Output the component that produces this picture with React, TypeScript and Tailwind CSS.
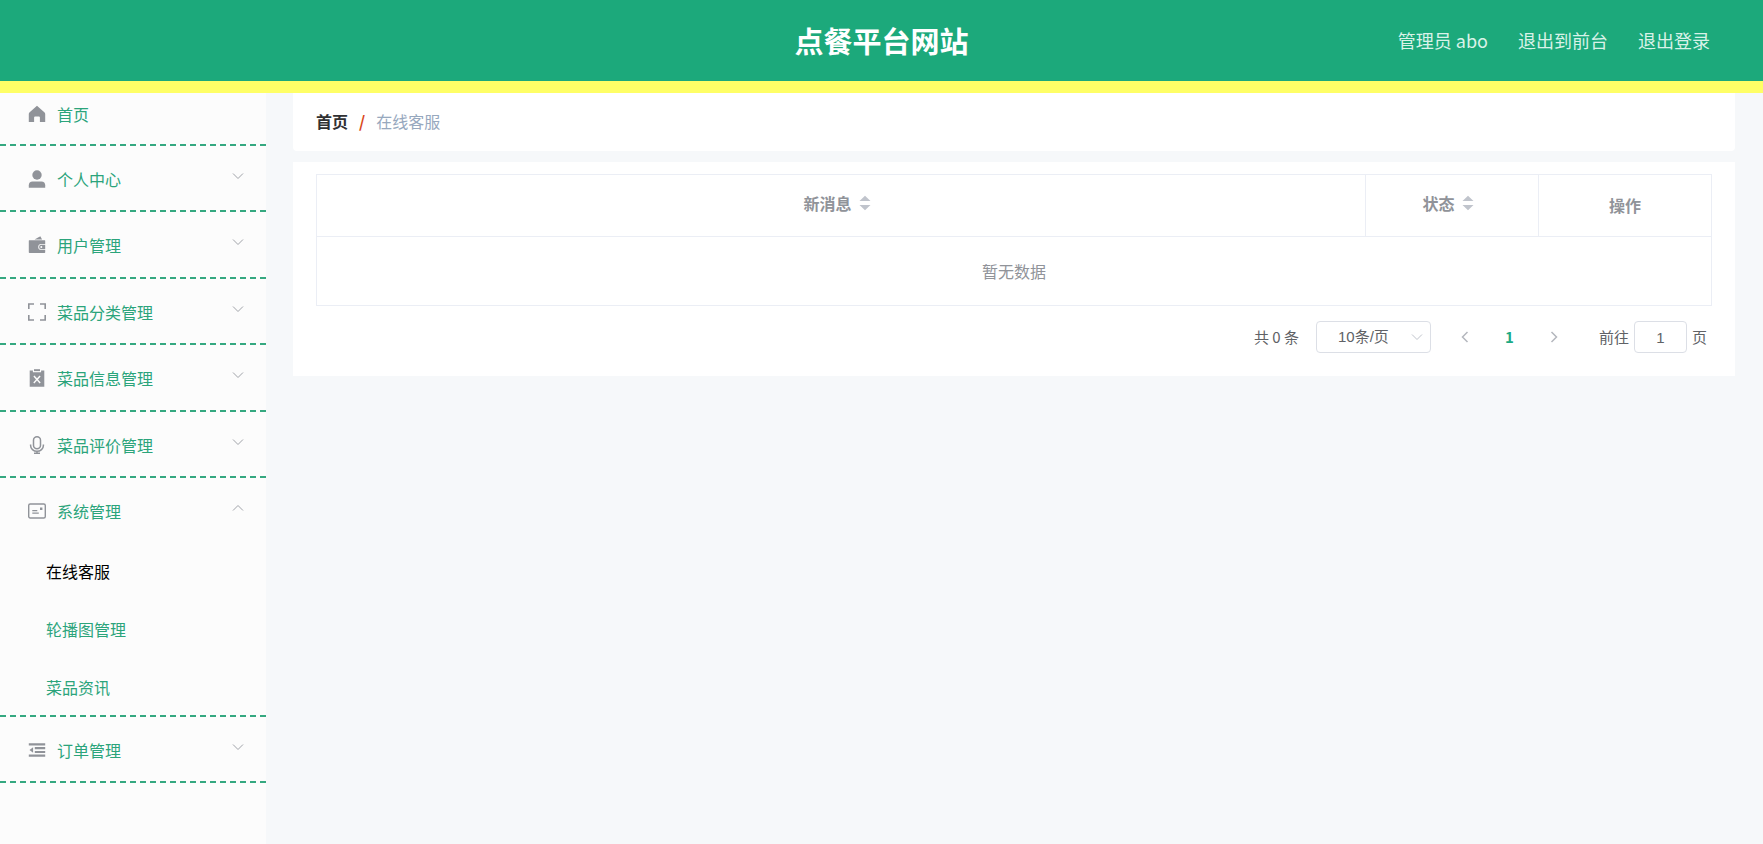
import { type FC, type ReactNode, useState } from "react";

// ── Icons ───────────────────────────────────────────────────────────────────

const Icon: FC<{ children: ReactNode }> = ({ children }) => (
	<svg
		viewBox="0 0 18 18"
		className="w-[18px] h-[18px] shrink-0 text-[#909399]"
		fill="currentColor"
		aria-hidden="true"
	>
		{children}
	</svg>
);

const HomeIcon = () => (
	<Icon>
		<path d="M9 .8 16.600 7.600q.6.6.6 1.300v8.200h-5.300v-4.600q0-1-1-1H7.100q-1 0-1 1v4.600H.8V8.900q0-.7.6-1.300Z" />
	</Icon>
);

const UserIcon = () => (
	<Icon>
		<circle cx="9" cy="5" r="4.700" />
		<path d="M.8 17.700v-2.500q0-3.800 3.800-3.800h8.800q3.800 0 3.800 3.800v2.500Z" />
	</Icon>
);

const WalletIcon = () => (
	<Icon>
		<path d="m6.600 3.500 5.200-3.100q.5-.2.8.3l1.500 2.800Z" />
		<path d="M1.200 4.300h15.500q.5 0 .5.500v3.200h-4q-3 0-3 2.900t3 2.900h4v2.500q0 .7-.7.700H1.500q-.7 0-.7-.7V4.800q0-.5.4-.5Z" />
		<path
			fillRule="evenodd"
			d="M13.300 8.700h3.900v4.400h-3.900a2.200 2.200 0 0 1 0-4.400Zm0 1.200a1 1 0 1 0 0 2 1 1 0 0 0 0-2Z"
		/>
	</Icon>
);

const ScreenIcon = () => (
	<Icon>
		<path
			d="M.8 6V1h5.200M12 1h5.200v5M17.200 12v5H12M6 17H.8v-5"
			fill="none"
			stroke="currentColor"
			strokeWidth="1.600"
		/>
	</Icon>
);

const ClipboardIcon = () => (
	<Icon>
		<path d="M6 .2h6v1.900H6Z" />
		<path
			fillRule="evenodd"
			d="M1.700 1.600h3.200v1.700h8.200V1.600h3.200v16.200H1.700ZM6.400 6.400l-1 1L8 10.400l-2.700 3 1 1L9 11.500l2.600 2.900 1.100-1-2.700-3 2.600-3-1-1L9 9.300Z"
		/>
	</Icon>
);

const MicIcon = () => (
	<Icon>
		<g fill="none" stroke="currentColor" strokeWidth="1.500">
			<rect x="5.500" y=".8" width="7" height="12" rx="3.500" />
			<path d="M2.600 8.500v1a6.400 5.800 0 0 0 12.800 0v-1M9 15.300v2M6 17.200h6" />
		</g>
	</Icon>
);

const PostcardIcon = () => (
	<Icon>
		<rect
			x=".7"
			y="2"
			width="16.600"
			height="14"
			rx="1.500"
			fill="none"
			stroke="currentColor"
			strokeWidth="1.400"
		/>
		<path d="M4.300 7.900h5v1.300h-5ZM4.300 10.400h6.500v1.300H4.300ZM12 5.500h2.400v2.600H12Z" />
	</Icon>
);

const FoldIcon = () => (
	<Icon>
		<path d="M.8 2.200h16.400v2.400H.8ZM6.800 6.100h10.400v2.100H6.800ZM6.800 9.900h10.400V12H6.800ZM.8 13.500h16.400v2.300H.8ZM1.500 9l3.600-2.700v5.400Z" />
	</Icon>
);

const Chevron: FC<{ className: string; d: string }> = ({ className, d }) => (
	<svg
		viewBox="0 0 12 12"
		className={className}
		fill="none"
		stroke="currentColor"
		aria-hidden="true"
	>
		<path d={d} />
	</svg>
);

const DOWN = "m1 3.500 5 5 5-5";
const UP = "m1 8.500 5-5 5 5";

const SortIcon = () => (
	<svg
		viewBox="0 0 12 16"
		className="w-3 h-4 mr-2 text-[#c0c4cc]"
		fill="currentColor"
		aria-hidden="true"
	>
		<path d="M6 .8 11.500 6H.5ZM6 15.200.5 10h11Z" />
	</svg>
);

// ── Sidebar ─────────────────────────────────────────────────────────────────

type MenuGroup = { label: string; icon: ReactNode; children?: string[] };

const menu: MenuGroup[] = [
	{ label: "个人中心", icon: <UserIcon /> },
	{ label: "用户管理", icon: <WalletIcon /> },
	{ label: "菜品分类管理", icon: <ScreenIcon /> },
	{ label: "菜品信息管理", icon: <ClipboardIcon /> },
	{ label: "菜品评价管理", icon: <MicIcon /> },
	{
		label: "系统管理",
		icon: <PostcardIcon />,
		children: ["在线客服", "轮播图管理", "菜品资讯"],
	},
	{ label: "订单管理", icon: <FoldIcon /> },
];

const Sidebar: FC = () => {
	const [open, setOpen] = useState("系统管理");
	const [active, setActive] = useState("在线客服");

	return (
		<nav className="w-[266px] shrink-0 bg-[#fcfcfc] text-base text-[#2ba47b]">
			<a
				href="#home"
				className="flex items-center gap-[11px] h-[53px] pl-7 pb-2.5 border-b-2 border-dashed border-[#35a880]"
			>
				<HomeIcon />
				首页
			</a>
			<ul>
				{menu.map((item) => {
					const expanded = open === item.label;
					return (
						<li
							key={item.label}
							className="border-b-2 border-dashed border-[#35a880] even:pb-px"
						>
							<button
								type="button"
								aria-expanded={expanded}
								onClick={() => setOpen(expanded ? "" : item.label)}
								className="flex items-center gap-[11px] w-full h-16 pl-7 pr-[22px] pt-0.5 cursor-pointer"
							>
								{item.icon}
								{item.label}
								<Chevron
									className="w-3 h-3 ml-auto mb-1.5 text-[#a0a3a9]"
									d={expanded ? UP : DOWN}
								/>
							</button>
							{expanded && item.children && (
								<ul className="-mb-0.5">
									{item.children.map((child) => (
										<li key={child}>
											<a
												href={`#${child}`}
												onClick={() => setActive(child)}
												className={`flex items-center h-[58px] pl-[46px] ${active === child ? "text-black" : ""}`}
											>
												{child}
											</a>
										</li>
									))}
								</ul>
							)}
						</li>
					);
				})}
			</ul>
		</nav>
	);
};

// ── Message table ───────────────────────────────────────────────────────────

const MessageTable: FC = () => (
	<table className="w-full table-fixed border-collapse border border-[#ebeef5] text-base text-[#909399]">
		<thead>
			<tr className="h-[62px]">
				<th className="border border-[#ebeef5] font-bold pb-px">
					<button
						type="button"
						className="inline-flex items-center gap-[7px] pb-1 cursor-pointer"
					>
						新消息
						<SortIcon />
					</button>
				</th>
				<th className="w-[173px] border border-[#ebeef5] font-bold pb-px">
					<button
						type="button"
						className="inline-flex items-center gap-[7px] pb-1 cursor-pointer"
					>
						状态
						<SortIcon />
					</button>
				</th>
				<th className="w-[173px] border border-[#ebeef5] font-bold pb-px">
					操作
				</th>
			</tr>
		</thead>
		<tbody>
			<tr className="h-[69px]">
				<td colSpan={3} className="text-center">
					暂无数据
				</td>
			</tr>
		</tbody>
	</table>
);

const Pagination: FC = () => {
	const [page, setPage] = useState("1");

	return (
		<div className="flex items-center justify-end h-8 mt-[15px] pr-[5px] text-[15px] text-[#606266]">
			<span>共 0 条</span>
			<div className="relative ml-[17px]">
				<select
					aria-label="每页条数"
					className="block w-[115px] h-8 pl-[21px] appearance-none bg-white border border-[#dcdfe6] rounded font-['Liberation_Sans','Noto_Sans_CJK_SC',sans-serif]"
				>
					<option>10条/页</option>
					<option>20条/页</option>
					<option>50条/页</option>
				</select>
				<Chevron
					className="absolute right-2 top-[10px] w-3 h-3 text-[#c0c4cc] pointer-events-none"
					d={DOWN}
				/>
			</div>
			<div className="flex items-center ml-[13px]">
				<button
					type="button"
					aria-label="上一页"
					disabled
					className="flex justify-center w-[42px] text-[#b4b7be]"
				>
					<Chevron className="w-3 h-3 stroke-[1.500]" d="m8.500 1-5 5 5 5" />
				</button>
				<button type="button" className="w-[47px] font-bold text-[#1caa85]">
					1
				</button>
				<button
					type="button"
					aria-label="下一页"
					disabled
					className="flex justify-center w-[42px] text-[#b4b7be]"
				>
					<Chevron className="w-3 h-3 stroke-[1.500]" d="m3.500 1 5 5-5 5" />
				</button>
			</div>
			<label className="flex items-center gap-[5px] ml-6">
				前往
				<input
					value={page}
					onChange={(e) => setPage(e.target.value)}
					className="w-[53px] h-8 text-center bg-white border border-[#dcdfe6] rounded outline-none font-['Liberation_Sans',sans-serif]"
				/>
				页
			</label>
		</div>
	);
};

// ── Page ────────────────────────────────────────────────────────────────────

export default function App() {
	return (
		<div className="flex flex-col min-h-screen bg-[#f6f8fa] font-['Noto_Sans_CJK_SC',sans-serif]">
			<header className="grid grid-cols-[1fr_auto_1fr] items-center h-[93px] pb-0.5 bg-[#1ca97b] border-b-12 border-[#ffff66]">
				<h1 className="col-start-2 text-[29px] leading-10 font-bold text-white">
					点餐平台网站
				</h1>
				<div className="flex justify-end gap-[30px] pr-[53px] text-lg text-[#d9f2e8]">
					<span>管理员 abo</span>
					<a href="#front">退出到前台</a>
					<a href="#logout">退出登录</a>
				</div>
			</header>

			<div className="flex flex-1">
				<Sidebar />
				<main className="flex-1 min-w-0 pl-[27px] pr-7">
					<div className="flex items-center gap-[11px] h-[58px] px-[23px] pb-[3px] bg-white rounded-b text-base">
						<a href="#home" className="font-bold text-[#303133]">
							首页
						</a>
						<span className="font-bold text-[#d9481c]">/</span>
						<span className="text-[#97a8be]">在线客服</span>
					</div>
					<section className="mt-[11px] px-[23px] pt-3 pb-[23px] bg-white">
						<MessageTable />
						<Pagination />
					</section>
				</main>
			</div>
		</div>
	);
}
